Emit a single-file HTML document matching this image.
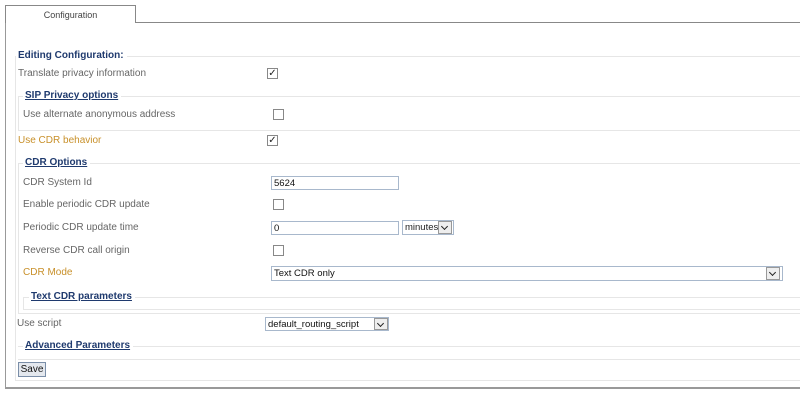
<!DOCTYPE html>
<html><head><style>
body{margin:0;width:800px;height:401px;background:#fff;position:relative;overflow:hidden;font-family:"Liberation Sans",Arial,sans-serif;font-size:10px;color:#555}
.a{position:absolute;white-space:nowrap}
.l{color:#666;margin-top:1px}
.o{color:#c8902a;margin-top:1px}
.lg{color:#1f3a6e;font-weight:bold;font-size:10px;background:#fff;padding:0 3px 0 2px}
.u{text-decoration:underline}
.ln{position:absolute;height:1px;background:#e6e6e6}
.vl{position:absolute;width:1px;background:#e6e6e6}
.cb{position:absolute;width:9px;height:9px;border:1px solid #888;background:#fff}
.ck{font-size:10px;line-height:9px;color:#222;text-align:center}
.in{position:absolute;border:1px solid #a8b8cc;background:#fff;height:12px;font-size:9.5px;color:#111;line-height:13px;padding-left:2px;box-sizing:content-box}
.dd{position:absolute;width:12px;height:11px;border:1px solid #999;background:#eee}
.dd:after{content:"";position:absolute;left:3px;top:2px;width:4px;height:4px;border-right:1.5px solid #222;border-bottom:1.5px solid #222;transform:rotate(45deg)}
</style></head><body>
<div class="a" style="left:5px;top:5px;width:129px;height:17px;border:1px solid #888;border-bottom:none;background:#fff;text-align:center;line-height:18px;font-size:9px;color:#444">Configuration</div>
<div class="ln" style="left:135px;top:22px;width:665px;background:#888"></div>
<div class="vl" style="left:5px;top:23px;height:364px;background:#999"></div>
<div class="ln" style="left:5px;top:387px;width:795px;background:#999;height:2px"></div>

<div class="ln" style="left:15px;top:56px;width:785px"></div>
<div class="vl" style="left:15px;top:56px;height:324px"></div>
<div class="ln" style="left:15px;top:380px;width:785px"></div>
<div class="a lg" style="left:16px;top:50px">Editing Configuration:</div>

<div class="a l" style="left:18px;top:67px">Translate privacy information</div>
<div class="cb ck" style="left:267px;top:68px">✓</div>

<div class="ln" style="left:18px;top:96px;width:782px"></div>
<div class="vl" style="left:18px;top:96px;height:34px"></div>
<div class="ln" style="left:18px;top:130px;width:782px"></div>
<div class="a lg u" style="left:23px;top:90px">SIP Privacy options</div>
<div class="a l" style="left:23px;top:108px">Use alternate anonymous address</div>
<div class="cb" style="left:273px;top:109px"></div>

<div class="a o" style="left:18px;top:134px">Use CDR behavior</div>
<div class="cb ck" style="left:267px;top:135px">✓</div>

<div class="ln" style="left:18px;top:163px;width:782px"></div>
<div class="vl" style="left:18px;top:163px;height:150px"></div>
<div class="ln" style="left:18px;top:313px;width:782px"></div>
<div class="a lg u" style="left:23px;top:157px">CDR Options</div>

<div class="a l" style="left:23px;top:176px">CDR System Id</div>
<div class="in" style="left:271px;top:176px;width:124px">5624</div>
<div class="a l" style="left:23px;top:198px">Enable periodic CDR update</div>
<div class="cb" style="left:273px;top:199px"></div>
<div class="a l" style="left:23px;top:221px">Periodic CDR update time</div>
<div class="in" style="left:271px;top:221px;width:124px">0</div>
<div class="in" style="left:402px;top:220px;width:48px;height:13px;color:#222">minutes</div>
<div class="dd" style="left:438px;top:221px"></div>
<div class="a l" style="left:23px;top:244px">Reverse CDR call origin</div>
<div class="cb" style="left:273px;top:245px"></div>
<div class="a o" style="left:23px;top:266px">CDR Mode</div>
<div class="in" style="left:271px;top:266px;width:508px;height:13px">Text CDR only</div>
<div class="dd" style="left:766px;top:267px"></div>

<div class="ln" style="left:23px;top:297px;width:777px"></div>
<div class="vl" style="left:23px;top:297px;height:12px"></div>
<div class="ln" style="left:23px;top:309px;width:777px"></div>
<div class="a lg u" style="left:29px;top:291px">Text CDR parameters</div>

<div class="a l" style="left:17px;top:317px">Use script</div>
<div class="in" style="left:265px;top:317px;width:120px;height:12px">default_routing_script</div>
<div class="dd" style="left:374px;top:318px;height:10px"></div>

<div class="ln" style="left:18px;top:346px;width:782px"></div>
<div class="ln" style="left:18px;top:359px;width:782px"></div>
<div class="a lg u" style="left:23px;top:340px">Advanced Parameters</div>
<div class="a" style="left:18px;top:362px;width:26px;height:13px;border:1px solid #7a8ea8;background:#e4e8ee;font-size:10px;line-height:13px;text-align:center;color:#111">Save</div>
</body></html>
